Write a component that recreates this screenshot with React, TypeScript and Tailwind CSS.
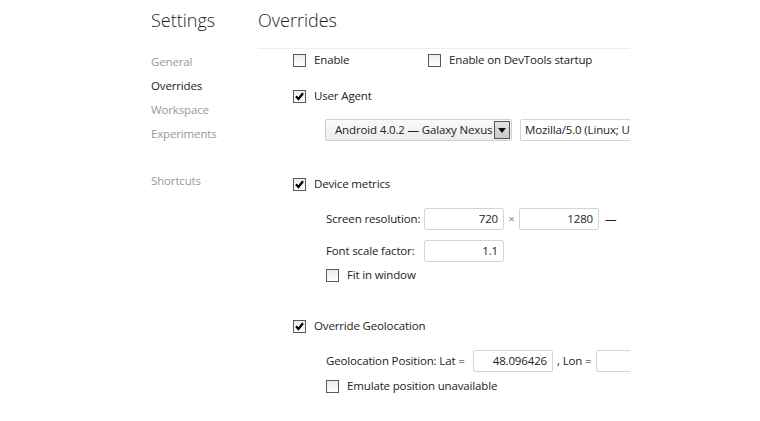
import React from 'react';

function Checkbox({ checked }: { checked?: boolean }) {
  return (
    <div className="w-[13px] h-[13px] border border-[#5a5a5a] bg-gradient-to-b from-[#ececec] to-white flex items-center justify-center shrink-0">
      {checked && (
        <svg width="9" height="9" viewBox="0 0 9 9">
          <path d="M1 4.3 L3.4 7 L8 1.3" stroke="#000" strokeWidth="2.2" fill="none" />
        </svg>
      )}
    </div>
  );
}

function CheckRow({ label, checked, className = '' }: { label: string; checked?: boolean; className?: string }) {
  return (
    <div className={`flex items-center h-[20px] gap-[8px] whitespace-nowrap ${className}`}>
      <Checkbox checked={checked} />
      <span>{label}</span>
    </div>
  );
}

function TextInput({ value, className = '' }: { value: string; className?: string }) {
  return (
    <div
      className={`h-[22px] border border-[#d4d4d4] rounded-[2px] bg-white flex items-center justify-end px-[5px] shrink-0 ${className}`}
    >
      {value}
    </div>
  );
}

export default function App() {
  return (
    <div
      className="w-[760px] h-[421px] bg-white flex text-[#222] text-[11.5px] tracking-[-0.15px] overflow-hidden"
      style={{ fontFamily: '"Open Sans", "Noto Sans", sans-serif' }}
    >
      {/* sidebar */}
      <div className="w-[258px] pl-[151px] pt-[6px] shrink-0">
        <div className="text-[18px] leading-[28px] tracking-normal text-[#222] font-light">Settings</div>
        <div className="mt-[16px] flex flex-col text-[#999]">
          <div className="h-[24px] leading-[24px]">General</div>
          <div className="h-[24px] leading-[24px] text-[#222]">Overrides</div>
          <div className="h-[24px] leading-[24px]">Workspace</div>
          <div className="h-[24px] leading-[24px]">Experiments</div>
          <div className="h-[24px] leading-[24px] mt-[23px]">Shortcuts</div>
        </div>
      </div>

      {/* main */}
      <div className="w-[372px] shrink-0 overflow-hidden pt-[6px]">
        <div className="text-[18px] leading-[28px] tracking-normal text-[#222] font-light">Overrides</div>
        <div className="mt-[14px] border-b border-[#eeeeee]" />

        <div className="pl-[35px] pt-[1px] flex flex-col">
          <div className="flex items-center h-[20px]">
            <CheckRow label="Enable" className="w-[135px] shrink-0" />
            <CheckRow label="Enable on DevTools startup" />
          </div>

          <CheckRow label="User Agent" checked className="mt-[16px]" />

          <div className="mt-[13px] ml-[32px] flex items-center gap-[8px] whitespace-nowrap">
            <div className="w-[187px] h-[22px] border border-[#cfcfcf] rounded-[2px] bg-gradient-to-b from-[#fafafa] to-[#ececec] flex items-center justify-between pl-[9px] pr-[1px] shrink-0">
              <span>Android 4.0.2 — Galaxy Nexus</span>
              <div className="w-[16px] h-[18px] border border-[#555] bg-gradient-to-b from-[#e4e4e4] to-[#c8c8c8] flex items-center justify-center">
                <svg width="8" height="5" viewBox="0 0 8 5">
                  <path d="M0 0 H8 L4 5 Z" fill="#111" />
                </svg>
              </div>
            </div>
            <div className="h-[22px] w-[200px] border border-[#d4d4d4] rounded-[2px] flex items-center pl-[4px] shrink-0 overflow-hidden">
              Mozilla/5.0 (Linux; U
            </div>
          </div>

          <CheckRow label="Device metrics" checked className="mt-[33px]" />

          <div className="mt-[14px] ml-[33px] flex items-center whitespace-nowrap">
            <span className="w-[98px] shrink-0">Screen resolution:</span>
            <TextInput value="720" className="w-[80px]" />
            <span className="text-[#888] w-[15px] shrink-0 text-center">×</span>
            <TextInput value="1280" className="w-[80px]" />
            <span className="ml-[6px] shrink-0">—</span>
          </div>

          <div className="mt-[10px] ml-[33px] flex items-center whitespace-nowrap">
            <span className="w-[98px] shrink-0">Font scale factor:</span>
            <TextInput value="1.1" className="w-[80px]" />
          </div>

          <CheckRow label="Fit in window" className="mt-[3px] ml-[33px] gap-[7px]" />

          <CheckRow label="Override Geolocation" checked className="mt-[31px]" />

          <div className="mt-[14px] ml-[33px] flex items-center whitespace-nowrap">
            <span className="w-[147px] shrink-0">Geolocation Position: Lat =</span>
            <TextInput value="48.096426" className="w-[80px]" />
            <span className="w-[43px] shrink-0 pl-[4px]">, Lon =</span>
            <TextInput value="" className="w-[80px]" />
          </div>

          <CheckRow label="Emulate position unavailable" className="mt-[4px] ml-[33px] gap-[7px]" />
        </div>
      </div>
    </div>
  );
}
